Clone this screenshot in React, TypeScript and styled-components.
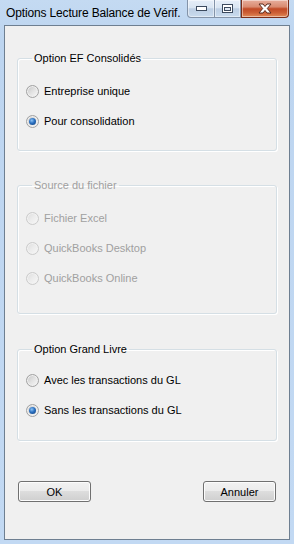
import React from 'react';
import styled, { createGlobalStyle } from 'styled-components';

const GlobalStyle = createGlobalStyle`
  html, body {
    margin: 0;
    padding: 0;
    background: #bfd7f1;
  }
`;

const Window = styled.div`
  width: 294px;
  height: 544px;
  box-sizing: border-box;
  display: flex;
  flex-direction: column;
  padding: 0 4px 4px 4px;
  background: linear-gradient(180deg, #c4daf2 0px, #bdd5f0 40px, #c2d9f3 100%);
  font-family: 'Liberation Sans', Arial, sans-serif;
`;

const TitleBar = styled.div`
  height: 25px;
  display: flex;
  justify-content: space-between;
  align-items: flex-start;
`;

const Title = styled.div`
  font-family: 'Liberation Sans', Arial, sans-serif;
  font-size: 12px;
  letter-spacing: -0.15px;
  color: #000;
  padding: 6px 0 0 2px;
  line-height: 14px;
  white-space: nowrap;
  overflow: hidden;
`;

const Captions = styled.div`
  display: flex;
  flex-shrink: 0;
  margin-right: 1px;
`;

const CaptionButton = styled.div<{ $kind: 'min' | 'max' | 'close' }>`
  flex-shrink: 0;
  height: 18px;
  box-sizing: border-box;
  display: flex;
  align-items: center;
  justify-content: center;
  border: 1px solid ${({ $kind }) => ($kind === 'close' ? '#7a2d18' : '#8393a8')};
  border-top: none;
  width: ${({ $kind }) => ($kind === 'min' ? 28 : $kind === 'max' ? 26 : 48)}px;
  border-left: ${({ $kind }) => ($kind === 'max' ? 'none' : undefined)};
  border-radius: ${({ $kind }) =>
    $kind === 'min' ? '0 0 0 4px' : $kind === 'close' ? '0 0 4px 0' : '0'};
  background: ${({ $kind }) =>
    $kind === 'close'
      ? 'linear-gradient(180deg, #e7ae9c 0%, #d98b71 40%, #c14a26 52%, #cc5f35 75%, #e08a58 100%)'
      : 'linear-gradient(180deg, #e6eef8 0%, #d9e5f2 45%, #bccee3 52%, #c9dbee 100%)'};
  box-shadow: inset 0 0 0 1px rgba(255, 255, 255, 0.45);
`;

function MinIcon() {
  return (
    <svg width="11" height="5" viewBox="0 0 11 5">
      <rect x="0.5" y="0.5" width="10" height="4" fill="#fff" stroke="#3c4a5e" />
    </svg>
  );
}

function MaxIcon() {
  return (
    <svg width="11" height="9" viewBox="0 0 11 9">
      <rect x="0.5" y="0.5" width="10" height="8" fill="#fff" stroke="#3c4a5e" />
      <rect x="2.5" y="3.5" width="6" height="3" fill="#dfe8f3" stroke="#3c4a5e" />
    </svg>
  );
}

function CloseIcon() {
  return (
    <svg width="14" height="11" viewBox="0 0 14 11">
      <path
        d="M1 1 H5 L7 3.5 L9 1 H13 L9.3 5.5 L13 10 H9 L7 7.5 L5 10 H1 L4.7 5.5 Z"
        fill="#fff"
        stroke="#5a2a1c"
        strokeWidth="1"
        strokeLinejoin="round"
      />
    </svg>
  );
}

const Client = styled.div`
  flex: 1;
  display: flex;
  flex-direction: column;
  border: 1px solid #6e7f91;
  background: #f0f0f0;
  padding: 26px 12px 0 12px;
`;

const GroupBox = styled.fieldset<{ $top: number; $bottom: number; $after: number }>`
  margin: 0 0 ${({ $after }) => $after}px 0;
  padding: ${({ $top }) => $top}px 0 ${({ $bottom }) => $bottom}px 8px;
  border: 1px solid #d5dfe5;
  border-radius: 3px;
  box-shadow: inset 1px 1px 0 #fff, 1px 1px 0 #fff;
  display: flex;
  flex-direction: column;
  gap: 17px;
`;

const Legend = styled.legend<{ $disabled?: boolean }>`
  margin-left: 6px;
  padding: 0 2px;
  font-size: 11px;
  line-height: 13px;
  color: ${({ $disabled }) => ($disabled ? '#a0a0a0' : '#000')};
`;

const RadioRow = styled.label<{ $disabled?: boolean }>`
  display: flex;
  align-items: center;
  gap: 5px;
  height: 13px;
  font-size: 11px;
  line-height: 13px;
  color: ${({ $disabled }) => ($disabled ? '#a0a0a0' : '#000')};
`;

const RadioCircle = styled.span<{ $checked?: boolean; $disabled?: boolean }>`
  width: 13px;
  height: 13px;
  box-sizing: border-box;
  border-radius: 50%;
  border: 1px solid ${({ $disabled }) => ($disabled ? '#cbcbcb' : '#a2a2a2')};
  background: ${({ $disabled }) =>
    $disabled
      ? 'linear-gradient(135deg, #dcdcdc 0%, #ececec 50%, #f8f8f8 100%)'
      : 'linear-gradient(135deg, #c4c4c4 0%, #e2e2e2 50%, #fafafa 100%)'};
  box-shadow: inset 0 0 0 1px ${({ $disabled }) => ($disabled ? '#f2f2f2' : '#f0f0f0')};
  display: flex;
  align-items: center;
  justify-content: center;
  flex-shrink: 0;

  &::after {
    content: '';
    display: ${({ $checked }) => ($checked ? 'block' : 'none')};
    width: 7px;
    height: 7px;
    border-radius: 50%;
    background: radial-gradient(circle at 40% 35%, #8ec4f5 0%, #2a6fc0 45%, #123f78 100%);
  }
`;

const ButtonRow = styled.div`
  display: flex;
  justify-content: space-between;
  padding: 0 1px;
`;

const Button = styled.button`
  width: 73px;
  height: 21px;
  box-sizing: border-box;
  padding: 0;
  border: 1px solid #707070;
  border-radius: 3px;
  background: linear-gradient(180deg, #f2f2f2 0%, #ebebeb 49%, #dddddd 50%, #cfcfcf 100%);
  box-shadow: inset 0 0 0 1px #fcfcfc;
  font-family: 'Liberation Sans', Arial, sans-serif;
  font-size: 11px;
  color: #000;
`;

type Option = { label: string; checked?: boolean };

function Radio({ label, checked, disabled }: Option & { disabled?: boolean }) {
  return (
    <RadioRow $disabled={disabled}>
      <RadioCircle $checked={checked} $disabled={disabled} />
      {label}
    </RadioRow>
  );
}

const efOptions: Option[] = [
  { label: 'Entreprise unique' },
  { label: 'Pour consolidation', checked: true },
];

const sourceOptions: Option[] = [
  { label: 'Fichier Excel' },
  { label: 'QuickBooks Desktop' },
  { label: 'QuickBooks Online' },
];

const glOptions: Option[] = [
  { label: 'Avec les transactions du GL' },
  { label: 'Sans les transactions du GL', checked: true },
];

export default function App() {
  return (
    <>
      <GlobalStyle />
      <Window>
        <TitleBar>
          <Title>Options Lecture Balance de Vérif.</Title>
          <Captions>
            <CaptionButton $kind="min">
              <MinIcon />
            </CaptionButton>
            <CaptionButton $kind="max">
              <MaxIcon />
            </CaptionButton>
            <CaptionButton $kind="close">
              <CloseIcon />
            </CaptionButton>
          </Captions>
        </TitleBar>
        <Client>
          <GroupBox $top={20} $bottom={22} $after={28}>
            <Legend>Option EF Consolidés</Legend>
            {efOptions.map((o) => (
              <Radio key={o.label} {...o} />
            ))}
          </GroupBox>
          <GroupBox $top={20} $bottom={28} $after={29}>
            <Legend $disabled>Source du fichier</Legend>
            {sourceOptions.map((o) => (
              <Radio key={o.label} {...o} disabled />
            ))}
          </GroupBox>
          <GroupBox $top={18} $bottom={23} $after={40}>
            <Legend>Option Grand Livre</Legend>
            {glOptions.map((o) => (
              <Radio key={o.label} {...o} />
            ))}
          </GroupBox>
          <ButtonRow>
            <Button>OK</Button>
            <Button>Annuler</Button>
          </ButtonRow>
        </Client>
      </Window>
    </>
  );
}
